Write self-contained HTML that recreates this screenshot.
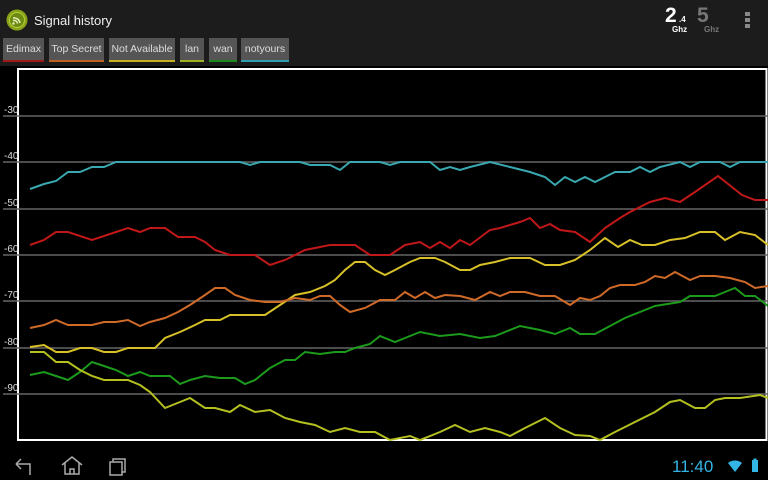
<!DOCTYPE html><html><head><style>
body{margin:0;width:768px;height:480px;background:#000;overflow:hidden;font-family:"Liberation Sans",sans-serif;position:relative}
.top{position:absolute;left:0;top:0;width:768px;height:66px;background:#1c1c1c}
.title{position:absolute;left:34px;top:13px;color:#eee;font-size:13px}
.tab{position:absolute;top:38px;height:22px;background:#555;color:#ddd;font-size:10.5px;line-height:22px;text-align:center}
.tab i{position:absolute;left:0;right:0;bottom:-2px;height:2px}
</style></head><body>
<div class="top"></div>
<svg style="position:absolute;left:6px;top:9px" width="22" height="22"><circle cx="11" cy="11" r="10.5" fill="#8aa21a"/><circle cx="11" cy="11" r="7.5" fill="#6d8a10" stroke="#b5cf3b" stroke-width="1"/><path d="M7 9a6 6 0 0 1 7 5M7 11.5a3.5 3.5 0 0 1 4.5 3" stroke="#e8f0c0" stroke-width="1.5" fill="none"/><circle cx="7.5" cy="14.5" r="1.2" fill="#e8f0c0"/></svg>
<div class="title">Signal history</div>
<div class="tab" style="left:3px;width:41px">Edimax<i style="background:#a01818"></i></div>
<div class="tab" style="left:49px;width:55px">Top Secret<i style="background:#c06020"></i></div>
<div class="tab" style="left:109px;width:66px">Not Available<i style="background:#c8b020"></i></div>
<div class="tab" style="left:180px;width:24px">lan<i style="background:#a0b020"></i></div>
<div class="tab" style="left:209px;width:28px">wan<i style="background:#1a8a1a"></i></div>
<div class="tab" style="left:241px;width:48px">notyours<i style="background:#30a0b0"></i></div>
<div style="position:absolute;left:665px;top:4px;color:#fff;font-weight:bold;font-size:21px">2</div>
<div style="position:absolute;left:679px;top:15px;color:#fff;font-weight:bold;font-size:8px">.4</div>
<div style="position:absolute;left:672px;top:25px;color:#fff;font-weight:bold;font-size:8px">Ghz</div>
<div style="position:absolute;left:697px;top:4px;color:#777;font-weight:bold;font-size:21px">5</div>
<div style="position:absolute;left:704px;top:25px;color:#777;font-weight:bold;font-size:8px">Ghz</div>
<div style="position:absolute;left:745px;top:12px;width:5px;height:16px;background:repeating-linear-gradient(#888 0 4px,transparent 4px 6px)"></div>
<svg style="position:absolute;left:0;top:66px" width="768" height="380">
<rect x="18" y="3" width="748.5" height="371" fill="none" stroke="#fff" stroke-width="2"/>
<g stroke="#666" stroke-width="1.5"><line x1="3" x2="768" y1="50" y2="50"/><line x1="3" x2="768" y1="96" y2="96"/><line x1="3" x2="768" y1="143" y2="143"/><line x1="3" x2="768" y1="189" y2="189"/><line x1="3" x2="768" y1="235" y2="235"/><line x1="3" x2="768" y1="282" y2="282"/><line x1="3" x2="768" y1="328" y2="328"/></g>
<g fill="#ddd" font-size="10" font-family="Liberation Sans"><text x="4" y="47">-30</text><text x="4" y="93">-40</text><text x="4" y="140">-50</text><text x="4" y="186">-60</text><text x="4" y="232">-70</text><text x="4" y="279">-80</text><text x="4" y="325">-90</text></g>
<g fill="none" stroke-width="2" transform="translate(0,-66)">
<polyline stroke="#3aa8b0" points="30,189 44,184 56,181 68,172 80,172 92,167 104,167 116,162 240,162 250,165 260,162 300,162 310,165 330,165 340,170 350,162 380,162 390,165 400,162 430,162 440,170 450,167 460,170 470,167 490,162 510,167 530,172 545,177 555,185 565,177 575,182 585,177 595,182 605,177 615,172 630,172 640,167 650,172 660,167 680,162 690,167 700,162 720,162 730,167 740,162 768,162"/>
<polyline stroke="#c01818" points="30,245 44,240 56,232 68,232 80,236 92,240 104,236 116,232 128,228 140,232 150,228 165,228 178,237 195,237 205,242 215,250 230,255 255,255 270,265 285,260 305,250 330,245 355,245 370,255 390,255 405,245 420,242 430,248 440,242 450,248 460,240 470,245 490,230 500,228 520,222 530,218 540,228 550,224 560,230 575,232 590,242 605,228 620,218 630,212 640,207 650,202 665,198 680,202 695,192 718,176 742,195 755,200 768,200"/>
<polyline stroke="#d8c028" points="30,347 44,345 56,352 68,352 80,348 92,348 104,352 116,352 128,348 155,348 165,338 180,332 195,325 205,320 220,320 230,315 245,315 265,315 280,305 295,295 310,292 325,286 335,280 345,270 355,262 365,262 375,270 385,275 395,270 410,262 420,258 435,258 445,262 460,270 470,270 480,265 495,262 510,258 530,258 545,265 560,265 575,260 590,250 605,238 618,247 630,240 642,245 655,245 670,240 685,238 700,232 715,232 725,240 740,232 755,235 768,245"/>
<polyline stroke="#d06a28" points="30,328 44,325 56,320 68,325 80,325 92,325 104,322 116,322 128,320 140,326 150,322 165,318 178,312 190,305 205,295 215,288 225,288 235,295 250,300 265,302 280,302 295,298 310,300 320,296 330,296 340,305 350,312 365,308 380,300 395,300 405,292 415,298 425,292 435,298 445,295 460,296 475,300 490,292 500,296 510,292 525,292 540,296 555,296 570,305 580,298 590,300 600,296 610,288 620,285 635,285 645,282 655,276 665,278 675,272 690,280 700,276 715,276 730,278 745,282 755,288 768,286"/>
<polyline stroke="#1c9a1c" points="30,375 44,372 56,376 68,380 80,372 92,362 104,366 116,370 128,376 140,372 150,376 170,376 180,384 190,380 205,376 220,378 235,378 245,384 255,380 270,368 285,360 295,360 305,352 320,354 335,352 345,352 355,348 370,344 380,336 395,342 405,338 420,332 440,336 460,334 480,338 495,336 505,332 520,326 540,330 555,334 570,328 580,334 595,334 610,326 625,318 640,312 655,306 680,302 690,296 700,296 715,296 725,292 735,288 745,296 755,296 768,306"/>
<polyline stroke="#b4c020" points="30,352 44,352 56,362 68,362 80,370 92,376 104,380 116,380 128,380 140,385 150,392 165,408 180,402 190,398 205,408 215,408 230,412 240,405 255,412 270,410 285,418 300,422 315,425 330,432 345,428 360,432 375,432 390,440 410,436 420,440 440,432 455,425 470,432 485,428 500,432 510,436 525,428 545,418 560,428 575,435 590,436 600,440 615,432 635,422 655,412 670,402 680,400 695,408 705,408 715,400 725,398 740,398 760,395 768,398"/>
</g></svg>
<svg style="position:absolute;left:12px;top:455px" width="125" height="22" fill="none" stroke="#aaa" stroke-width="1.5">
<path d="M4 9h14v11M4 9l5-5M4 9l5 5"/>
<path d="M50 10l10-8 10 8M53 8v11h14V8M58 19v-5h4v5"/>
<rect x="98" y="7" width="12" height="13"/><path d="M101 7V4h12v13h-3"/></svg>
<div style="position:absolute;left:672px;top:457px;color:#33b5e5;font-size:17px">11:40</div>
<svg style="position:absolute;left:727px;top:458px" width="35" height="16"><path d="M1 5a11 11 0 0 1 14 0L8 14z" fill="#33b5e5"/><rect x="25" y="2" width="6" height="12" fill="#33b5e5"/><rect x="26.5" y="0.5" width="3" height="2" fill="#33b5e5"/></svg>
</body></html>
